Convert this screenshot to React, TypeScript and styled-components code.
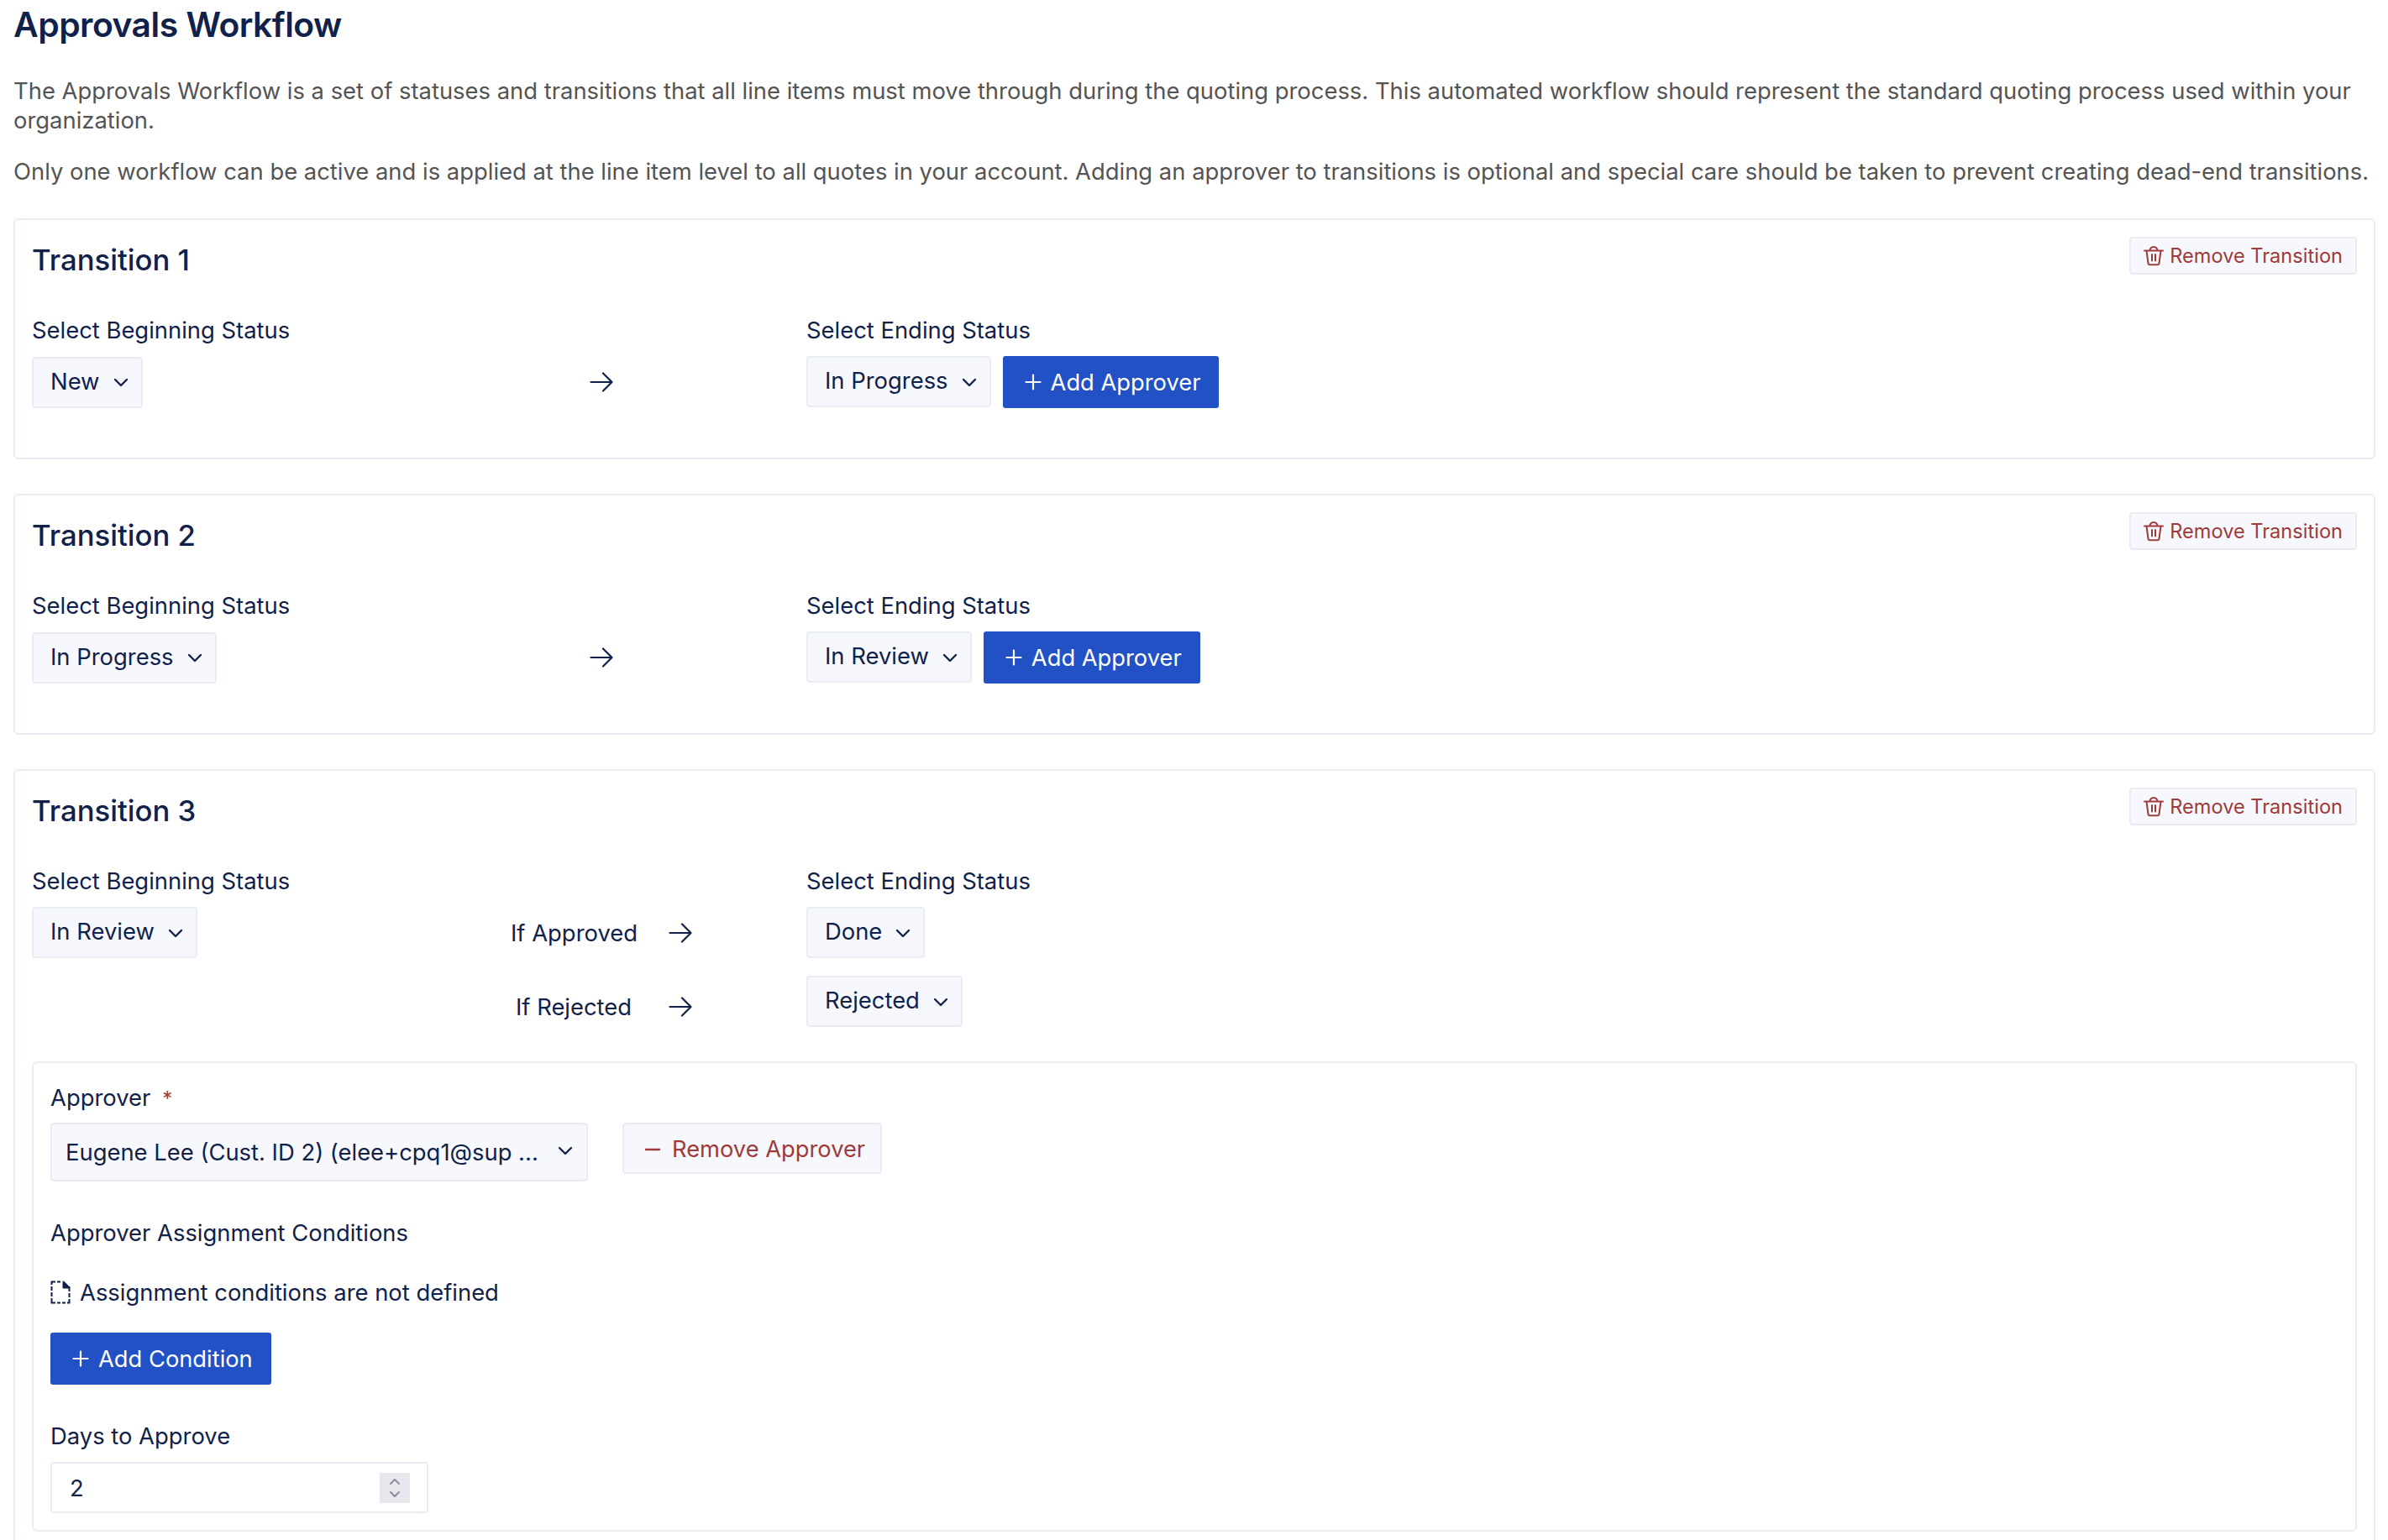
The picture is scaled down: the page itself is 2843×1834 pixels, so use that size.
import React from "react";
import styled, { createGlobalStyle } from "styled-components";

const Global = createGlobalStyle`
  html, body { margin: 0; padding: 0; background: #fff; overflow: hidden; }
  #root { height: 1834px; overflow: hidden; }
  * { box-sizing: border-box; }
`;
const Page = styled.div`
  padding: 7px 15px 0 16px;
  font-family: Inter, "Liberation Sans", sans-serif;
  font-size: 27.4px;
  color: #10214a;
`;
const PageTitle = styled.h1`
  margin: 0;
  font-size: 40.8px;
  line-height: 44px;
  font-weight: 600;
  letter-spacing: -0.5px;
`;
const Intro = styled.p<{ $top: number }>`
  margin: ${(p) => p.$top}px 0 0;
  font-size: 27.4px;
  line-height: 35px;
  color: #545454;
`;
const Card = styled.section<{ $top?: number; $pb?: number }>`
  margin-top: ${(p) => p.$top ?? 41}px;
  border: 2px solid #e9edf3;
  border-radius: 6px;
  padding: 20px 20px ${(p) => p.$pb ?? 59}px;
`;
const CardHead = styled.div`
  display: flex;
  justify-content: space-between;
  align-items: flex-start;
  height: 95px;
`;
const CardTitle = styled.h2`
  margin: 0;
  font-size: 34.7px;
  line-height: 55px;
  font-weight: 500;
`;
const GhostDanger = styled.button`
  display: inline-flex;
  align-items: center;
  gap: 7px;
  height: 45px;
  padding: 0 15px;
  border: 2px solid #e9edf3;
  border-radius: 4px;
  background: #f6f8fd;
  color: #a03a3a;
  font: 400 23.6px Inter, sans-serif;
  white-space: nowrap;
`;
const StatusGrid = styled.div`
  display: grid;
  grid-template-columns: 434px 488px 1fr;
  align-items: center;
`;
const FieldLabel = styled.div<{ $col?: number }>`
  grid-column: ${(p) => p.$col ?? 1};
  line-height: 33px;
  height: 34px;
  margin-bottom: 13px;
  white-space: nowrap;
`;
const Mid = styled.div<{ $offset?: number }>`
  grid-column: 2;
  display: flex;
  justify-content: center;
  align-items: center;
  gap: 38px;
  padding-top: ${(p) => p.$offset ?? 0}px;
  line-height: 32px;
`;
const BranchLabel = styled.span`
  width: 150px;
  text-align: center;
  white-space: nowrap;
`;
const LeftCell = styled.div`
  grid-column: 1;
  display: flex;
`;
const RightCell = styled.div<{ $mt?: number }>`
  grid-column: 3;
  display: flex;
  gap: 14px;
  margin-top: ${(p) => p.$mt ?? 0}px;
`;
const SelectBox = styled.div`
  display: inline-flex;
  align-items: center;
  gap: 16px;
  height: 61px;
  padding: 0 15px 3px 20px;
  border: 2px solid #e9edf3;
  border-radius: 4px;
  background: #f6f8fd;
  white-space: nowrap;
  svg { margin-top: 4px; }
`;
const Primary = styled.button`
  display: inline-flex;
  align-items: center;
  gap: 11px;
  height: 62px;
  padding: 0 22px 0 26px;
  border: 0;
  border-radius: 3px;
  background: #2251c6;
  color: #fff;
  font: 400 27.3px Inter, sans-serif;
  white-space: nowrap;
`;
const ApproverCard = styled.div`
  margin-top: 41px;
  border: 2px solid #e9edf3;
  border-radius: 6px;
  padding: 25px 20px 20px;
`;
const Label = styled.div<{ $top?: number; $bottom?: number }>`
  height: 34px;
  line-height: 33px;
  margin-top: ${(p) => p.$top ?? 0}px;
  margin-bottom: ${(p) => p.$bottom ?? 0}px;
  white-space: nowrap;
`;
const Required = styled.span`
  color: #a03a3a;
  margin-left: 14px;
  font-size: 24px;
`;
const ApproverRow = styled.div`
  display: flex;
  align-items: flex-start;
  gap: 41px;
`;
const ApproverSelect = styled(SelectBox)`
  width: 640px;
  height: 70px;
  padding: 0 16px;
  justify-content: space-between;
  svg { margin-top: -4px; }
`;
const RemoveApprover = styled.button`
  display: inline-flex;
  align-items: center;
  gap: 13px;
  height: 61px;
  width: 309px;
  padding: 2px 0 0 24px;
  border: 2px solid #e9edf3;
  border-radius: 4px;
  background: #f6f8fd;
  color: #a03a3a;
  font: 400 27.3px Inter, sans-serif;
  white-space: nowrap;
`;
const EmptyNote = styled.div`
  display: flex;
  align-items: center;
  gap: 11px;
  height: 34px;
  margin: 36px 0 31px;
`;
const NumberBox = styled.div`
  display: flex;
  align-items: center;
  justify-content: space-between;
  width: 450px;
  height: 61px;
  padding: 0 20px 0 21px;
  border: 2px solid #e9edf3;
  border-radius: 4px;
  background: #fff;
`;
const Spinner = styled.div`
  display: flex;
  flex-direction: column;
  align-items: center;
  justify-content: center;
  gap: 6px;
  width: 36px;
  height: 36px;
  background: #e6e7ec;
`;

const Chevron = () => (
  <svg width="18" height="11" viewBox="0 0 18 11" fill="none" stroke="currentColor" strokeWidth="2.4" strokeLinecap="round" strokeLinejoin="round">
    <path d="M2 2l7 7 7-7" />
  </svg>
);
const Arrow = () => (
  <svg width="28" height="24" viewBox="0 0 28 24" fill="none" stroke="currentColor" strokeWidth="2.2" strokeLinecap="round" strokeLinejoin="round">
    <path d="M1.5 12h25M16 1.5L26.5 12 16 22.5" />
  </svg>
);
const Plus = () => (
  <svg width="20" height="20" viewBox="0 0 20 20" fill="none" stroke="currentColor" strokeWidth="2.2" strokeLinecap="round">
    <path d="M10 1.5v17M1.5 10h17" />
  </svg>
);
const Minus = () => (
  <svg width="20" height="20" viewBox="0 0 20 20" fill="none" stroke="currentColor" strokeWidth="2.4" strokeLinecap="round">
    <path d="M2 10h16" />
  </svg>
);
const Trash = () => (
  <svg width="24" height="25" viewBox="0 0 24 25" fill="none" stroke="currentColor" strokeWidth="2" strokeLinecap="round" strokeLinejoin="round">
    <path d="M1 6.5h22M3.5 6.5l2 15a2 2 0 0 0 2 1.8h9a2 2 0 0 0 2-1.8l2-15M7.5 6.5a4.5 4.5 0 0 1 9 0M10 11v7.5M14 11v7.5" />
  </svg>
);
const DashedDoc = () => (
  <svg width="24" height="28" viewBox="0 0 24 28" fill="none" stroke="currentColor" strokeWidth="2" strokeLinecap="square">
    <path d="M1.5 8v3M1.5 15v3M1.5 22v4.5H5M9 26.5h2M15 26.5h2M21 26.5h1.5V23M22.5 19v-3M22.5 12V8.5M1.5 4V1.5H5M9 1.5h2" />
    <path d="M15.5 1.5l7 7h-7z" fill="currentColor" strokeLinejoin="round" />
  </svg>
);
const MiniChevron = ({ up }: { up?: boolean }) => (
  <svg width="14" height="9" viewBox="0 0 14 9" fill="none" stroke="#8b8f99" strokeWidth="2" strokeLinecap="round" strokeLinejoin="round">
    <path d={up ? "M2 7l5-5 5 5" : "M2 2l5 5 5-5"} />
  </svg>
);

const Status = ({ value }: { value: string }) => (
  <SelectBox>
    {value}
    <Chevron />
  </SelectBox>
);
const RemoveTransition = () => (
  <GhostDanger>
    <Trash />
    Remove Transition
  </GhostDanger>
);
const AddApprover = () => (
  <Primary>
    <Plus />
    Add Approver
  </Primary>
);

const Simple = ({ n, from, to, top }: { n: number; from: string; to: string; top?: number }) => (
  <Card $top={top}>
    <CardHead>
      <CardTitle>Transition {n}</CardTitle>
      <RemoveTransition />
    </CardHead>
    <StatusGrid>
      <FieldLabel>Select Beginning Status</FieldLabel>
      <FieldLabel $col={3}>Select Ending Status</FieldLabel>
      <LeftCell>
        <Status value={from} />
      </LeftCell>
      <Mid>
        <Arrow />
      </Mid>
      <RightCell>
        <Status value={to} />
        <AddApprover />
      </RightCell>
    </StatusGrid>
  </Card>
);

export default function App() {
  return (
    <Page>
      <Global />
      <PageTitle>Approvals Workflow</PageTitle>
      <Intro $top={40}>
        The Approvals Workflow is a set of statuses and transitions that all line items must move through during the quoting process. This automated workflow should represent the standard quoting process used within your organization.
      </Intro>
      <Intro $top={26}>
        Only one workflow can be active and is applied at the line item level to all quotes in your account. Adding an approver to transitions is optional and special care should be taken to prevent creating dead-end transitions.
      </Intro>
      <Simple n={1} from="New" to="In Progress" top={38} />
      <Simple n={2} from="In Progress" to="In Review" />
      <Card $pb={20}>
        <CardHead>
          <CardTitle>Transition 3</CardTitle>
          <RemoveTransition />
        </CardHead>
        <StatusGrid>
          <FieldLabel>Select Beginning Status</FieldLabel>
          <FieldLabel $col={3}>Select Ending Status</FieldLabel>
          <LeftCell>
            <Status value="In Review" />
          </LeftCell>
          <Mid>
            <BranchLabel>If Approved</BranchLabel>
            <Arrow />
          </Mid>
          <RightCell>
            <Status value="Done" />
          </RightCell>
          <Mid $offset={33}>
            <BranchLabel>If Rejected</BranchLabel>
            <Arrow />
          </Mid>
          <RightCell $mt={21}>
            <Status value="Rejected" />
          </RightCell>
        </StatusGrid>
        <ApproverCard>
          <Label $bottom={12}>
            Approver<Required>*</Required>
          </Label>
          <ApproverRow>
            <ApproverSelect>
              <span>Eugene Lee (Cust. ID 2) (elee+cpq1@sup ...</span>
              <Chevron />
            </ApproverSelect>
            <RemoveApprover>
              <Minus />
              Remove Approver
            </RemoveApprover>
          </ApproverRow>
          <Label $top={45}>Approver Assignment Conditions</Label>
          <EmptyNote>
            <DashedDoc />
            Assignment conditions are not defined
          </EmptyNote>
          <Primary>
            <Plus />
            Add Condition
          </Primary>
          <Label $top={45} $bottom={13}>Days to Approve</Label>
          <NumberBox>
            2
            <Spinner>
              <MiniChevron up />
              <MiniChevron />
            </Spinner>
          </NumberBox>
        </ApproverCard>
      </Card>
    </Page>
  );
}
